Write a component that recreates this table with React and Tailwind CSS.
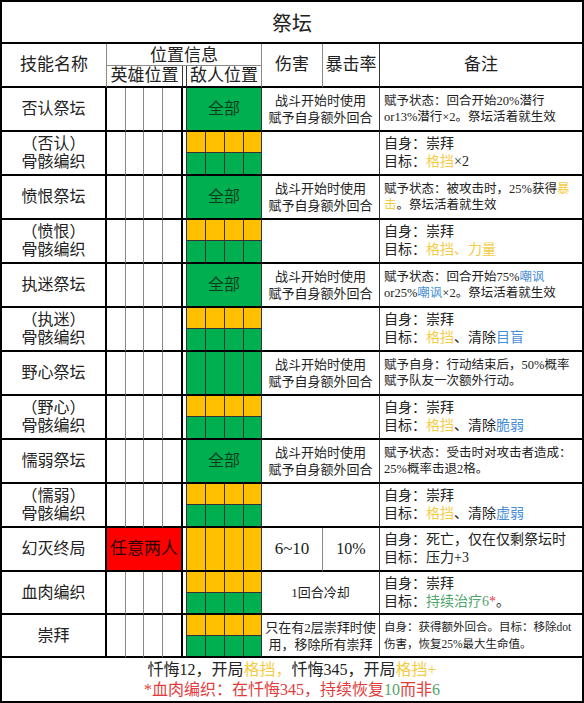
import React from "react";

const Y = ({ children }) => <span className="text-[#f5cc45]">{children}</span>;
const B = ({ children }) => <span className="text-[#4a8fd6]">{children}</span>;
const G = ({ children }) => <span className="text-[#4fa56c]">{children}</span>;
const R = ({ children }) => <span className="text-[#e23c3c]">{children}</span>;

const STD = ["战斗开始时使用", "赋予自身额外回合"];

const rows = [
  {
    name: ["否认祭坛"],
    enemy: "all",
    dmg: STD,
    noteSize: "s",
    notes: [<>赋予状态：回合开始20%潜行</>, <>or13%潜行×2。祭坛活着就生效</>],
  },
  {
    name: ["（否认）", "骨骸编织"],
    enemy: "split",
    notes: [<>自身：崇拜</>, <>目标：<Y>格挡</Y>×2</>],
  },
  {
    name: ["愤恨祭坛"],
    enemy: "all",
    dmg: STD,
    noteSize: "s",
    notes: [<>赋予状态：被攻击时，25%获得<Y>暴</Y></>, <><Y>击</Y>。祭坛活着就生效</>],
  },
  {
    name: ["（愤恨）", "骨骸编织"],
    enemy: "split",
    notes: [<>自身：崇拜</>, <>目标：<Y>格挡、力量</Y></>],
  },
  {
    name: ["执迷祭坛"],
    enemy: "all",
    dmg: STD,
    noteSize: "s",
    notes: [<>赋予状态：回合开始75%<B>嘲讽</B></>, <>or25%<B>嘲讽</B>×2。祭坛活着就生效</>],
  },
  {
    name: ["（执迷）", "骨骸编织"],
    enemy: "split",
    notes: [<>自身：崇拜</>, <>目标：<Y>格挡</Y>、清除<B>目盲</B></>],
  },
  {
    name: ["野心祭坛"],
    enemy: "green4",
    dmg: STD,
    noteSize: "s",
    notes: [<>赋予自身：行动结束后，50%概率</>, <>赋予队友一次额外行动。</>],
  },
  {
    name: ["（野心）", "骨骸编织"],
    enemy: "split",
    notes: [<>自身：崇拜</>, <>目标：<Y>格挡</Y>、清除<B>脆弱</B></>],
  },
  {
    name: ["懦弱祭坛"],
    enemy: "all",
    dmg: STD,
    noteSize: "s",
    notes: [<>赋予状态：受击时对攻击者造成：</>, <>25%概率击退2格。</>],
  },
  {
    name: ["（懦弱）", "骨骸编织"],
    enemy: "split",
    notes: [<>自身：崇拜</>, <>目标：<Y>格挡</Y>、清除<B>虚弱</B></>],
  },
  {
    name: ["幻灭终局"],
    hero: "red",
    enemy: "yellow4",
    dmgSplit: ["6~10", "10%"],
    notes: [<>自身：死亡，仅在仅剩祭坛时</>, <>目标：压力+3</>],
  },
  {
    name: ["血肉编织"],
    enemy: "split",
    dmg: ["1回合冷却"],
    notes: [<>自身：崇拜</>, <>目标：<G>持续治疗6</G><R>*</R>。</>],
  },
  {
    name: ["崇拜"],
    enemy: "split",
    dmg: ["只在有2层崇拜时使", "用，移除所有崇拜"],
    noteSize: "xs",
    notes: [<>自身：获得额外回合。目标：移除dot</>, <>伤害，恢复25%最大生命值。</>],
  },
];

function NameLine({ text }) {
  if (text.startsWith("（")) {
    const inner = text.slice(1, -1);
    return (
      <div className="flex whitespace-nowrap">
        <span className="inline-block w-[16px] text-right">（</span>
        <span>{inner}</span>
        <span className="inline-block w-[16px] text-left">）</span>
      </div>
    );
  }
  return <div className="whitespace-nowrap">{text}</div>;
}

function Enemy({ type }) {
  const base =
    "col-span-4 row-span-2 border-r border-r-[#333] border-b-2 border-b-black";
  if (type === "all") {
    return (
      <div className={`${base} bg-[#00b050] flex items-center justify-center text-[16px] text-[#0d3b1e]`}>
        全部
      </div>
    );
  }
  if (type === "green4" || type === "yellow4") {
    const bg = type === "green4" ? "bg-[#00b050]" : "bg-[#ffc000]";
    return (
      <div className={`${base} grid grid-cols-[19px_19px_19px_1fr]`}>
        <div className={`${bg} border-r border-r-[#333]`} />
        <div className={`${bg} border-r border-r-[#333]`} />
        <div className={`${bg} border-r border-r-[#333]`} />
        <div className={bg} />
      </div>
    );
  }
  return (
    <div className={`${base} grid grid-cols-[19px_19px_19px_1fr] grid-rows-2`}>
      <div className="bg-[#ffc000] border-r border-r-[#333] border-b border-b-[#333]" />
      <div className="bg-[#ffc000] border-r border-r-[#333] border-b border-b-[#333]" />
      <div className="bg-[#ffc000] border-r border-r-[#333] border-b border-b-[#333]" />
      <div className="bg-[#ffc000] border-b border-b-[#333]" />
      <div className="bg-[#00b050] border-r border-r-[#333]" />
      <div className="bg-[#00b050] border-r border-r-[#333]" />
      <div className="bg-[#00b050] border-r border-r-[#333]" />
      <div className="bg-[#00b050]" />
    </div>
  );
}

function Row({ r }) {
  const bb = "border-b-2 border-b-black";
  const noteCls =
    r.noteSize === "s"
      ? "text-[12.5px] leading-[16px]"
      : r.noteSize === "xs"
      ? "text-[11.5px] leading-[17px]"
      : "text-[14px] leading-[18px]";
  return (
    <>
      <div className={`row-span-2 border-r-2 border-r-black ${bb} flex flex-col items-center justify-center text-[16px] leading-[18px]`}>
        {r.name.map((n, i) => (
          <NameLine key={i} text={n} />
        ))}
      </div>
      {r.hero === "red" ? (
        <div className={`col-span-4 row-span-2 bg-[#ff0000] border-r-2 border-r-black ${bb} flex items-center justify-center text-[17px] text-[#2a0000] whitespace-nowrap`}>
          任意两人
        </div>
      ) : (
        <>
          <div className={`row-span-2 border-r border-r-[#8a8a8a] ${bb}`} />
          <div className={`row-span-2 border-r border-r-[#8a8a8a] ${bb}`} />
          <div className={`row-span-2 border-r border-r-[#8a8a8a] ${bb}`} />
          <div className={`row-span-2 border-r-2 border-r-black ${bb}`} />
        </>
      )}
      <div className={`row-span-2 border-r border-r-[#333] ${bb}`} />
      <Enemy type={r.enemy} />
      {r.dmgSplit ? (
        <>
          <div className={`row-span-2 border-r border-r-[#8a8a8a] ${bb} flex items-center justify-center text-[17px]`}>
            {r.dmgSplit[0]}
          </div>
          <div className={`row-span-2 border-r border-r-[#333] ${bb} flex items-center justify-center text-[16px]`}>
            {r.dmgSplit[1]}
          </div>
        </>
      ) : (
        <div className={`col-span-2 row-span-2 border-r border-r-[#333] ${bb} flex flex-col items-center justify-center text-[13px] leading-[17px]`}>
          {(r.dmg || []).map((d, i) => (
            <div key={i} className="whitespace-nowrap">{d}</div>
          ))}
        </div>
      )}
      <div className={`row-span-2 ${bb} flex flex-col justify-center items-start pl-[4px] ${noteCls}`}>
        {r.notes.map((n, i) => (
          <div key={i} className="whitespace-nowrap">{n}</div>
        ))}
      </div>
    </>
  );
}

export default function App() {
  return (
    <div className="w-[584px] h-[703px] bg-white text-[#222] font-['Liberation_Serif','Noto_Sans_CJK_SC',serif]">
      <div className="grid h-full w-full border-2 border-black grid-cols-[105px_19px_18px_19px_20px_4px_19px_19px_19px_18px_61px_57px_1fr] grid-rows-[42px_22px_22px_repeat(22,22px)_22px_21px_22px_21px_1fr]">
        {/* title */}
        <div className="col-span-full border-b-2 border-b-black flex items-center justify-center pt-[3px] text-[20px]">
          祭坛
        </div>
        {/* header row 1 */}
        <div className="row-span-2 border-r border-r-[#8a8a8a] border-b-2 border-b-black flex items-center justify-center text-[17px]">
          技能名称
        </div>
        <div className="col-span-9 border-r border-r-[#8a8a8a] border-b border-b-[#8a8a8a] flex items-center justify-center pt-[3px] text-[17px] leading-[18px]">
          位置信息
        </div>
        <div className="row-span-2 border-r border-r-[#8a8a8a] border-b-2 border-b-black flex items-center justify-center text-[17px]">
          伤害
        </div>
        <div className="row-span-2 border-r border-r-[#333] border-b-2 border-b-black flex items-center justify-center text-[17px] whitespace-nowrap">
          暴击率
        </div>
        <div className="row-span-2 border-b-2 border-b-black flex items-center justify-center text-[17px]">
          备注
        </div>
        {/* header row 2 */}
        <div className="col-span-4 border-r border-r-[#333] border-b-2 border-b-black flex items-center justify-center text-[17px] leading-[18px] whitespace-nowrap">
          英雄位置
        </div>
        <div className="border-r border-r-[#333] border-b-2 border-b-black" />
        <div className="col-span-4 border-r border-r-[#8a8a8a] border-b-2 border-b-black flex items-center justify-center text-[17px] leading-[18px] whitespace-nowrap">
          敌人位置
        </div>
        {/* body */}
        {rows.map((r, i) => (
          <Row key={i} r={r} />
        ))}
        {/* footer */}
        <div className="col-span-full flex flex-col items-center justify-center text-[16px] leading-[20px]">
          <div className="whitespace-nowrap">
            忏悔12，开局<Y>格挡，</Y>忏悔345，开局<Y>格挡+</Y>
          </div>
          <div className="whitespace-nowrap">
            <R>*血肉编织：在忏悔345，持续恢复</R>
            <G>10</G>
            <R>而非</R>
            <G>6</G>
          </div>
        </div>
      </div>
    </div>
  );
}
